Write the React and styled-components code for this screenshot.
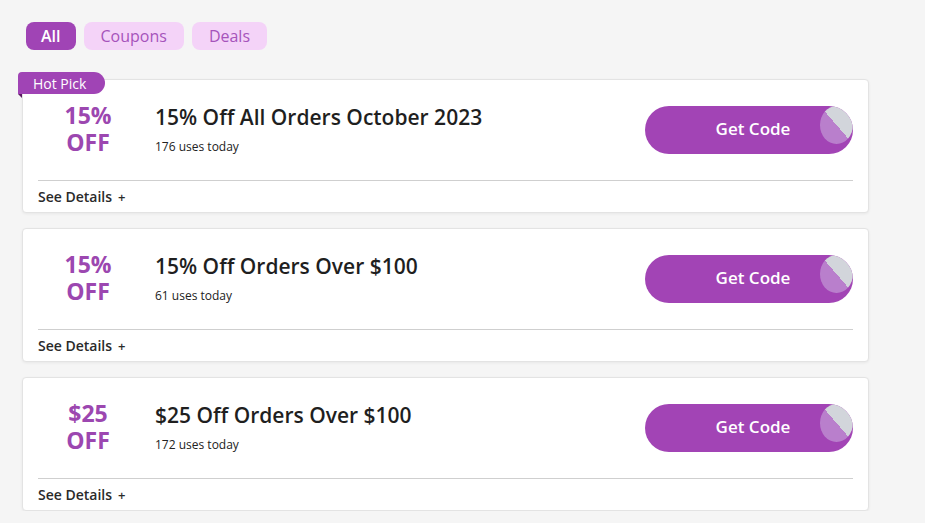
import React from 'react'
import styled, { createGlobalStyle } from 'styled-components'

const GlobalStyle = createGlobalStyle`
  body {
    margin: 0;
    background: #f5f5f5;
    font-family: "Open Sans", "Liberation Sans", sans-serif;
  }
`

const coupons = [
  { amount: '15%', title: '15% Off All Orders October 2023', uses: 176, hot: true },
  { amount: '15%', title: '15% Off Orders Over $100', uses: 61 },
  { amount: '$25', title: '$25 Off Orders Over $100', uses: 172 },
]

function CouponCard({ coupon }) {
  return (
    <Card>
      {coupon.hot && <HotBadge>Hot Pick</HotBadge>}
      <Main>
        <Amount>
          <AmountLine>{coupon.amount}</AmountLine>
          <AmountLine>OFF</AmountLine>
        </Amount>
        <Info>
          <Title>{coupon.title}</Title>
          <Uses>{coupon.uses} uses today</Uses>
        </Info>
        <CodeButton>Get Code</CodeButton>
      </Main>
      <Footer>See Details <Plus>+</Plus></Footer>
    </Card>
  )
}

export default function App() {
  return (
    <Page>
      <GlobalStyle />
      <Filters>
        <Filter active>All</Filter>
        <Filter>Coupons</Filter>
        <Filter>Deals</Filter>
      </Filters>
      <List>
        {coupons.map((c, i) => <CouponCard key={i} coupon={c} />)}
      </List>
    </Page>
  )
}

const Page = styled.div`
  padding: 22px 56px 0 22px;
`

const Filters = styled.div`
  display: flex;
  gap: 8px;
  padding-left: 4px;
  margin-bottom: 29px;
`

const Filter = styled.button`
  height: 28px;
  padding: 0 ${p => (p.active ? 15 : 17)}px;
  border: none;
  border-radius: 8px;
  font-family: inherit;
  font-size: 16px;
  font-weight: ${p => (p.active ? 600 : 500)};
  background: ${p => (p.active ? '#a044b5' : '#f4d3f8')};
  color: ${p => (p.active ? '#fff' : '#a653bb')};
`

const List = styled.div`
  display: flex;
  flex-direction: column;
  gap: 15px;
`

const Card = styled.div`
  position: relative;
  background: #fff;
  border: 1px solid #e3e3e3;
  border-radius: 4px;
  box-shadow: 0 1px 3px rgba(0, 0, 0, 0.06);
  padding: 0 15px;
`

const HotBadge = styled.div`
  position: absolute;
  top: -8px;
  left: -5px;
  height: 22px;
  padding: 0 19px 0 15px;
  display: flex;
  align-items: center;
  background: #a044b5;
  color: #fff;
  font-size: 14px;
  font-weight: 500;
  border-radius: 4px 11px 11px 0;

  &::after {
    content: '';
    position: absolute;
    left: 0;
    bottom: -4px;
    border-top: 4px solid #5b1a63;
    border-left: 4px solid transparent;
  }
`

const Main = styled.div`
  display: flex;
  align-items: center;
  height: 100px;
  border-bottom: 1px solid #cfcfcf;
`

const Amount = styled.div`
  width: 100px;
  display: flex;
  flex-direction: column;
  align-items: center;
  gap: 4px;
  color: #9c47b0;
  font-size: 23px;
  font-weight: 700;
  margin-right: 17px;
  margin-top: -2px;
`

const AmountLine = styled.span`
  line-height: 23px;
`

const Info = styled.div`
  flex: 1;
  display: flex;
  flex-direction: column;
  gap: 7px;
  margin-top: -2px;
`

const Title = styled.div`
  font-size: 21px;
  font-weight: 600;
  color: #1f1f1f;
`

const Uses = styled.div`
  font-size: 12px;
  color: #222;
`

const CodeButton = styled.button`
  position: relative;
  overflow: hidden;
  width: 208px;
  height: 48px;
  border: none;
  border-radius: 24px;
  background: #a244b5;
  color: #fff;
  font-family: inherit;
  font-size: 17px;
  font-weight: 600;
  padding: 0 0 3px 8px;

  &::after {
    content: '';
    position: absolute;
    top: 0;
    right: 0;
    width: 33px;
    height: 38px;
    border-radius: 50%;
    background: linear-gradient(to bottom left, #d2d5db 50%, #b97fcc 50%);
  }
`

const Footer = styled.div`
  height: 31px;
  display: flex;
  align-items: center;
  gap: 6px;
  font-size: 14px;
  font-weight: 600;
  color: #2a2a2a;
`

const Plus = styled.span`
  font-size: 13px;
`
